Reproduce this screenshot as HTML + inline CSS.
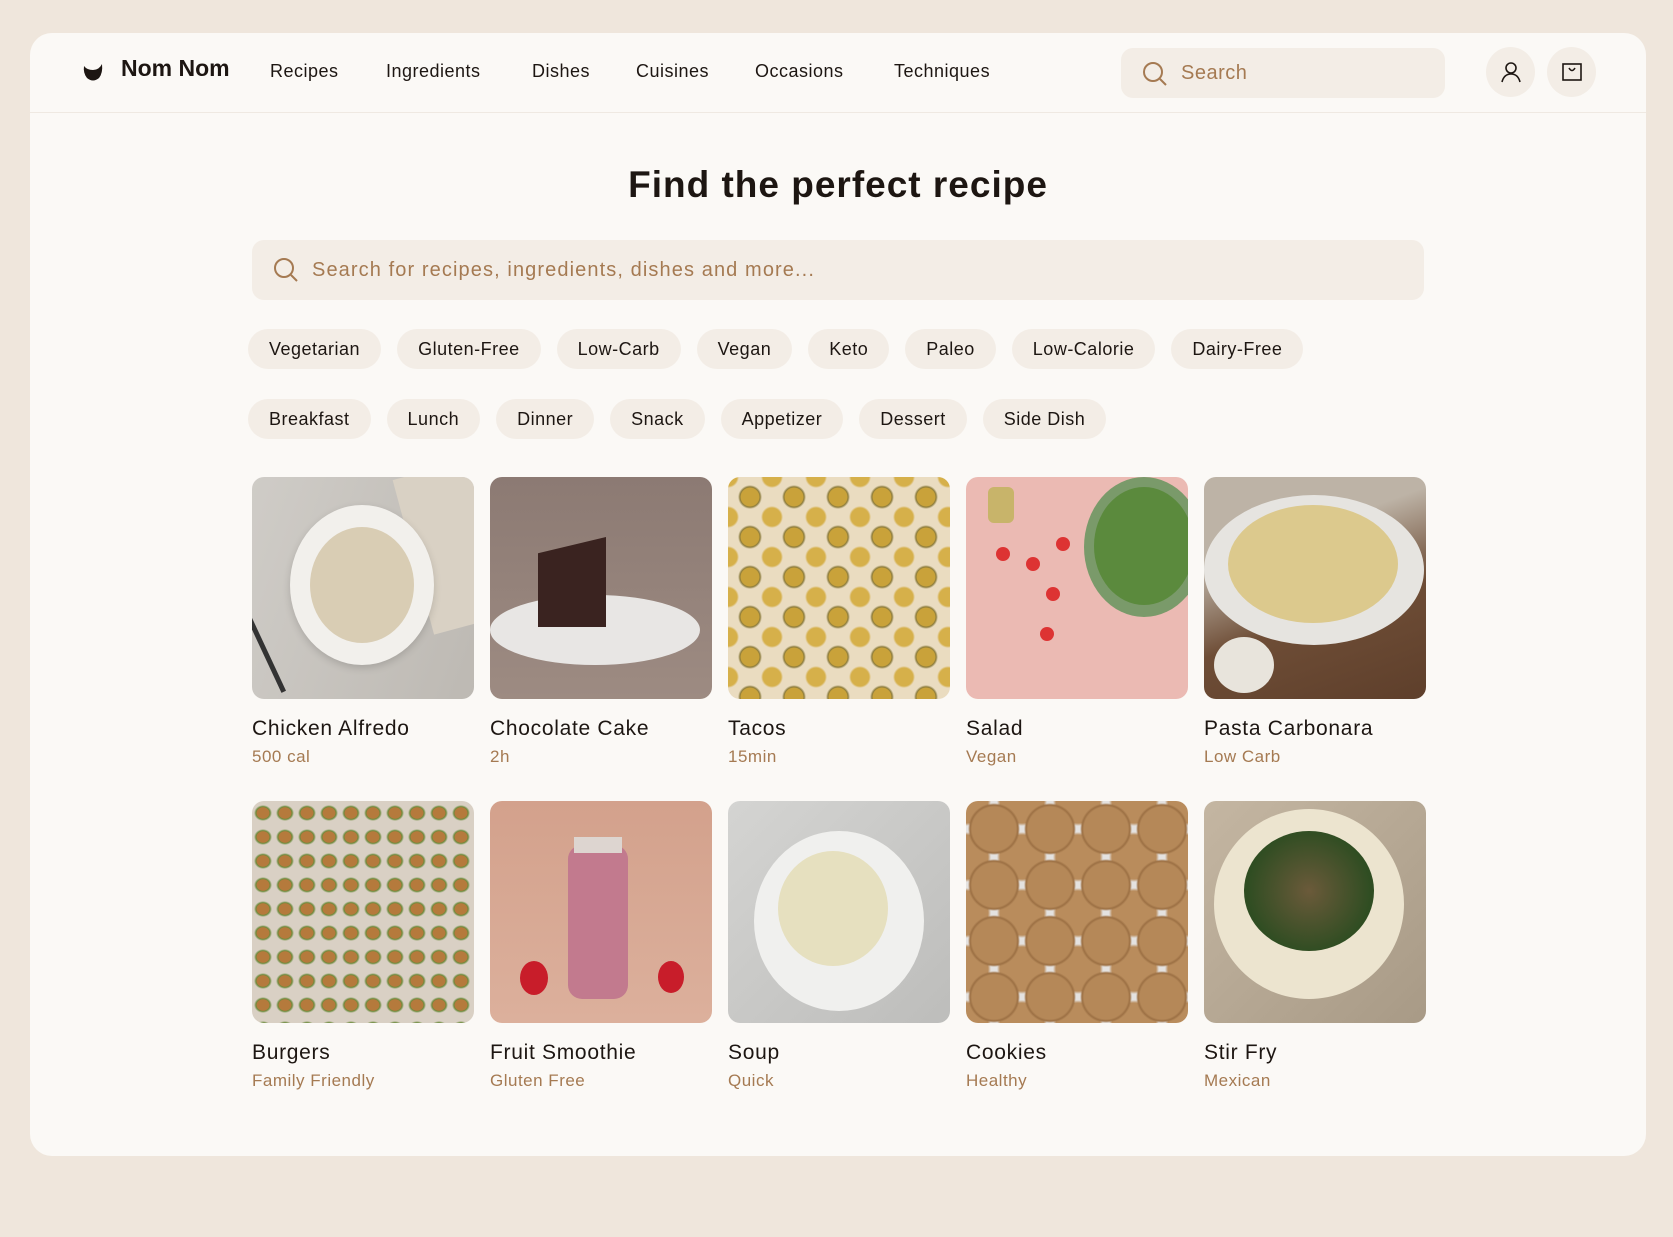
<!DOCTYPE html>
<html><head><meta charset="utf-8"><style>
*{box-sizing:border-box;margin:0;padding:0}
body{width:1673px;height:1237px;background:#efe6dc;font-family:"Liberation Sans",sans-serif;color:#1d1612;position:relative;overflow:hidden}
.card{position:absolute;left:30px;top:33px;width:1616px;height:1123px;background:#fbf9f6;border-radius:22px;overflow:hidden}
.hdr{position:absolute;left:0;top:0;width:100%;height:80px;border-bottom:1px solid #efe9e2}
.abs{position:absolute}
.nav{position:absolute;top:28px;font-size:18px;color:#1d1612;letter-spacing:0.5px}
.srch{position:absolute;left:1091px;top:15px;width:324px;height:50px;background:#f3ede6;border-radius:12px}
.circ{position:absolute;top:14px;width:49px;height:50px;border-radius:50%;background:#f3ede6}
h1{position:absolute;left:0;width:1616px;top:131px;text-align:center;font-size:37px;font-weight:bold;letter-spacing:1px}
.big{position:absolute;left:222px;top:207px;width:1172px;height:60px;background:#f3ede6;border-radius:12px}
.row{position:absolute;left:218px;display:flex;gap:16px}
.chip{height:40px;line-height:40px;padding:0 21px;background:#f3ede6;border-radius:20px;font-size:18px;letter-spacing:0.5px}
.item{position:absolute;width:222px}
.img{width:222px;height:222px;border-radius:12px;overflow:hidden;position:relative}
.t{font-size:21px;margin-top:18px;color:#1d1612;letter-spacing:0.7px}
.s{font-size:17px;margin-top:6px;color:#a57a52;letter-spacing:0.5px}
</style></head><body>
<div class="card">
 <div class="hdr">
  <svg class="abs" style="left:52px;top:28px" width="22" height="22" viewBox="0 0 22 22"><path d="M2 5 Q5 9 11 9 Q17 9 20 3 Q21 12 17 17 Q11 22 5 17 Q1 12 2 5Z" fill="#1d1612"/></svg>
  <div class="abs" style="left:91px;top:22px;font-size:23px;font-weight:bold">Nom Nom</div>
  <div class="nav" style="left:240px">Recipes</div>
  <div class="nav" style="left:356px">Ingredients</div>
  <div class="nav" style="left:502px">Dishes</div>
  <div class="nav" style="left:606px">Cuisines</div>
  <div class="nav" style="left:725px">Occasions</div>
  <div class="nav" style="left:864px">Techniques</div>
  <div class="srch">
   <svg class="abs" style="left:20px;top:12px" width="28" height="28" viewBox="0 0 28 28" fill="none" stroke="#a57a52" stroke-width="2"><circle cx="12" cy="12" r="9"/><path d="M19 19l6 6"/></svg>
   <div class="abs" style="left:60px;top:14px;font-size:20px;color:#a57a52;letter-spacing:0.5px">Search</div>
  </div>
  <div class="circ" style="left:1456px"><svg class="abs" style="left:13px;top:13px" width="24" height="24" viewBox="0 0 24 24" fill="none" stroke="#1d1612" stroke-width="1.6"><circle cx="12" cy="8" r="5"/><path d="M3 22 Q5 14 12 14 Q19 14 21 22"/></svg></div>
  <div class="circ" style="left:1517px"><svg class="abs" style="left:14px;top:14px" width="22" height="22" viewBox="0 0 22 22" fill="none" stroke="#1d1612" stroke-width="1.6"><rect x="2" y="3" width="18" height="16"/><path d="M8 7 Q11 12 14 7"/></svg></div>
 </div>
 <h1>Find the perfect recipe</h1>
 <div class="big">
  <svg class="abs" style="left:20px;top:16px" width="28" height="28" viewBox="0 0 28 28" fill="none" stroke="#a57a52" stroke-width="2"><circle cx="12" cy="12" r="9"/><path d="M19 19l6 6"/></svg>
  <div class="abs" style="left:60px;top:19px;font-size:20px;color:#a57a52;letter-spacing:1.1px">Search for recipes, ingredients, dishes and more...</div>
 </div>
 <div class="row" style="top:296px"><div class="chip">Vegetarian</div><div class="chip">Gluten-Free</div><div class="chip">Low-Carb</div><div class="chip">Vegan</div><div class="chip">Keto</div><div class="chip">Paleo</div><div class="chip">Low-Calorie</div><div class="chip">Dairy-Free</div></div>
 <div class="row" style="top:366px"><div class="chip">Breakfast</div><div class="chip">Lunch</div><div class="chip">Dinner</div><div class="chip">Snack</div><div class="chip">Appetizer</div><div class="chip">Dessert</div><div class="chip">Side Dish</div></div>

 <div class="item" style="left:222px;top:444px"><div class="img" style="background:linear-gradient(110deg,#cfccc7,#bdb9b3)"><div class="abs" style="left:160px;top:-10px;width:80px;height:160px;background:#d9d1c4;transform:rotate(-15deg)"></div><div class="abs" style="left:38px;top:28px;width:144px;height:160px;border-radius:50%;background:#f2f0ec;box-shadow:0 3px 8px rgba(0,0,0,.15)"></div><div class="abs" style="left:58px;top:50px;width:104px;height:116px;border-radius:50%;background:#d9cdb4"></div><div class="abs" style="left:6px;top:110px;width:5px;height:110px;background:#333;transform:rotate(-25deg)"></div></div><div class="t">Chicken Alfredo</div><div class="s">500 cal</div></div>
 <div class="item" style="left:460px;top:444px"><div class="img" style="background:linear-gradient(#8c7a73,#9d8b82)"><div class="abs" style="left:0;top:118px;width:210px;height:70px;border-radius:50%;background:#e8e6e4"></div><div class="abs" style="left:48px;top:60px;width:68px;height:90px;background:#3a2320;clip-path:polygon(0 18%,100% 0,100% 100%,0 100%)"></div></div><div class="t">Chocolate Cake</div><div class="s">2h</div></div>
 <div class="item" style="left:698px;top:444px"><div class="img" style="background:radial-gradient(circle at 50% 50%,#c9a23a 0 9px,#8a7a3a 10px,transparent 12px) 0 0/44px 40px,radial-gradient(circle at 50% 50%,#d6b04a 0 9px,transparent 11px) 22px 20px/44px 40px,#eadcc0"></div><div class="t">Tacos</div><div class="s">15min</div></div>
 <div class="item" style="left:936px;top:444px"><div class="img" style="background:#ebbab3"><div class="abs" style="left:118px;top:0;width:120px;height:140px;border-radius:50%;background:#7a9a6a"></div><div class="abs" style="left:128px;top:10px;width:100px;height:118px;border-radius:50%;background:#5b8a3d"></div><div class="abs" style="left:30px;top:70px;width:14px;height:14px;border-radius:50%;background:#d33;box-shadow:30px 10px 0 #d33,50px 40px 0 #d33,60px -10px 0 #d33,44px 80px 0 #d33"></div><div class="abs" style="left:22px;top:10px;width:26px;height:36px;border-radius:6px;background:#c8b46a"></div></div><div class="t">Salad</div><div class="s">Vegan</div></div>
 <div class="item" style="left:1174px;top:444px"><div class="img" style="background:linear-gradient(160deg,#bdb3a6 30%,#6e4d36 60%,#5e3f2b)"><div class="abs" style="left:0;top:18px;width:220px;height:150px;border-radius:50%;background:#e6e4e0"></div><div class="abs" style="left:24px;top:28px;width:170px;height:118px;border-radius:50%;background:#dcc98d"></div><div class="abs" style="left:10px;top:160px;width:60px;height:56px;border-radius:50%;background:#e8e4dc"></div></div><div class="t">Pasta Carbonara</div><div class="s">Low Carb</div></div>

 <div class="item" style="left:222px;top:768px"><div class="img" style="background:radial-gradient(ellipse 9px 8px at 50% 50%,#b57a3c 0 6px,#6b8a3a 7px,transparent 9px) 0 0/22px 24px,#d9d0c4"></div><div class="t">Burgers</div><div class="s">Family Friendly</div></div>
 <div class="item" style="left:460px;top:768px"><div class="img" style="background:linear-gradient(#d3a18c,#dcb09c)"><div class="abs" style="left:78px;top:44px;width:60px;height:154px;border-radius:14px;background:#c27a8e"></div><div class="abs" style="left:84px;top:36px;width:48px;height:16px;background:#ddd5d0"></div><div class="abs" style="left:30px;top:160px;width:28px;height:34px;border-radius:50%;background:#c81d2a"></div><div class="abs" style="left:168px;top:160px;width:26px;height:32px;border-radius:50%;background:#c81d2a"></div></div><div class="t">Fruit Smoothie</div><div class="s">Gluten Free</div></div>
 <div class="item" style="left:698px;top:768px"><div class="img" style="background:linear-gradient(135deg,#d4d4d2,#bdbdbb)"><div class="abs" style="left:26px;top:30px;width:170px;height:180px;border-radius:50%;background:#f0f0ee"></div><div class="abs" style="left:50px;top:50px;width:110px;height:115px;border-radius:50%;background:#e6e0bf"></div></div><div class="t">Soup</div><div class="s">Quick</div></div>
 <div class="item" style="left:936px;top:768px"><div class="img" style="background:radial-gradient(circle at 50% 50%,#b58858 0 22px,#9c7044 24px,transparent 26px) 0 0/56px 56px,radial-gradient(circle at 50% 50%,#b98c5c 0 22px,transparent 25px) 28px 28px/56px 56px,#e4e2e0"></div><div class="t">Cookies</div><div class="s">Healthy</div></div>
 <div class="item" style="left:1174px;top:768px"><div class="img" style="background:linear-gradient(135deg,#c4b6a2,#a89a86)"><div class="abs" style="left:10px;top:8px;width:190px;height:190px;border-radius:50%;background:#ece4cf"></div><div class="abs" style="left:40px;top:30px;width:130px;height:120px;border-radius:50%;background:radial-gradient(circle,#6b5a3a,#2f4d22 70%)"></div></div><div class="t">Stir Fry</div><div class="s">Mexican</div></div>
</div>
</body></html>
